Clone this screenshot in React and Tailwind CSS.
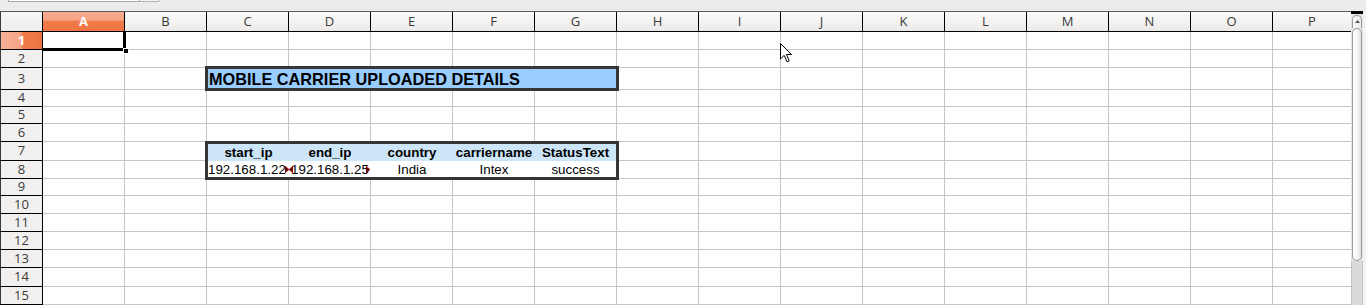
import React from "react";

const COLS = ["A", "B", "C", "D", "E", "F", "G", "H", "I", "J", "K", "L", "M", "N", "O", "P"];
const ROW_H = [
  "h-[18px]", "h-[18px]", "h-[22px]", "h-[17px]", "h-[17px]", "h-[18px]", "h-[19px]", "h-[18px]",
  "h-[17px]", "h-[18px]", "h-[18px]", "h-[18px]", "h-[18px]", "h-[19px]", "h-[18px]",
];

const HDR_FONT = "font-['Open_Sans',sans-serif] text-[13px] text-[#3a3a3a]";
const CELL_FONT = "font-['Liberation_Sans',Arial,sans-serif] text-[13.33px] text-black";

function Marker({ dir, className }) {
  return (
    <svg width="4" height="7" viewBox="0 0 4 7" className={"absolute " + className}>
      {dir === "r" ? (
        <path d="M0 0 L4 3.5 L0 7 Z" fill="#5a0a0a" stroke="#c00000" strokeWidth="0.6" />
      ) : (
        <path d="M4 0 L0 3.5 L4 7 Z" fill="#5a0a0a" stroke="#c00000" strokeWidth="0.6" />
      )}
    </svg>
  );
}

function TitleBox() {
  return (
    <div className="relative z-10 -ml-[2px] -mt-[2px] w-[414px] h-[25px] border-[3px] border-[#353535] bg-[#99ccff] flex items-center">
      <span className="pl-[1px] pt-[1px] font-['Liberation_Sans',Arial,sans-serif] text-[16.3px] font-bold text-black leading-none">
        MOBILE CARRIER UPLOADED DETAILS
      </span>
    </div>
  );
}

function TableBox() {
  const head = ["start_ip", "end_ip", "country", "carriername", "StatusText"];
  const widths = ["w-[81px]", "w-[82px]", "w-[82px]", "w-[82px]", "w-[81px]"];
  return (
    <div className={"relative z-10 -ml-[2px] -mt-[1px] w-[414px] h-[39px] border-[3px] border-[#353535] bg-white flex flex-col " + CELL_FONT}>
      <div className="flex h-[17px] bg-[#cce5f7]">
        {head.map((h, i) => (
          <div key={h} className={widths[i] + " flex items-center justify-center font-bold whitespace-nowrap"}>
            {h}
          </div>
        ))}
      </div>
      <div className="flex h-[16px] bg-white pt-[1px]">
        <div className="w-[81px] relative overflow-hidden whitespace-nowrap flex items-center">
          <span>192.168.1.22</span>
          <Marker dir="r" className="right-0 top-[4px]" />
        </div>
        <div className="w-[82px] relative overflow-hidden whitespace-nowrap flex items-center justify-center">
          <span>192.168.1.25</span>
          <Marker dir="l" className="left-0 top-[4px]" />
          <Marker dir="r" className="right-[1px] top-[4px]" />
        </div>
        <div className="w-[82px] flex items-center justify-center">India</div>
        <div className="w-[82px] flex items-center justify-center">Intex</div>
        <div className="w-[81px] flex items-center justify-center">success</div>
      </div>
    </div>
  );
}

function Row({ n }) {
  const h = ROW_H[n - 1];
  const selected = n === 1;
  return (
    <div className={"flex " + h}>
      <div
        className={
          "w-[43px] shrink-0 border-l border-l-[#3a3a3a] border-r border-r-black border-b border-b-black flex items-center justify-center " +
          HDR_FONT +
          (selected
            ? " bg-[linear-gradient(90deg,#f9b196_0%,#f7a587_45%,#ef7c4b_55%,#ee7543_100%)] text-white font-bold"
            : " bg-[#f1f0ef]")
        }
      >
        <span className={selected ? "text-white" : ""}>{n}</span>
      </div>
      {COLS.map((c) => {
        const w = c === "P" ? "w-[78px]" : "w-[82px]";
        if (n === 3 && c === "C") {
          return (
            <div key={c} className="w-[410px] shrink-0 border-b border-[#c6c6c6]">
              <TitleBox />
            </div>
          );
        }
        if ((n === 3 || n === 7 || n === 8) && ["D", "E", "F", "G"].includes(c)) return null;
        if (n === 7 && c === "C") {
          return (
            <div key={c} className="w-[410px] shrink-0">
              <TableBox />
            </div>
          );
        }
        if (n === 8 && c === "C") {
          return <div key={c} className="w-[410px] shrink-0 border-b border-[#c6c6c6]" />;
        }
        return (
          <div
            key={c}
            className={
              w +
              " shrink-0 relative border-b border-[#c6c6c6]" +
              (c === "P" ? "" : " border-r")
            }
          >
            {selected && c === "A" && (
              <>
                <div className="absolute -left-[1px] -top-[1px] w-[84px] h-[20px] border-t border-l border-r-[3px] border-b-[3px] border-black z-20" />
                <div className="absolute left-[80px] top-[16px] w-[6px] h-[6px] bg-black border border-white z-30" />
              </>
            )}
          </div>
        );
      })}
    </div>
  );
}

function Scrollbar() {
  return (
    <div className="w-[15px] shrink-0 flex bg-[#e6e5e4]">
      <div className="w-[12px] flex flex-col">
        <div className="h-[3px] bg-black" />
        <div className="h-[13px] mx-[1px] mt-[1px] rounded-t-[6px] border border-b-0 border-[#9a9a9a] bg-[linear-gradient(90deg,#fdfdfd,#e9e9e9)] flex items-start justify-center pt-[4px]">
          <svg width="5" height="3" viewBox="0 0 5 3">
            <path d="M0 3 L2.5 0 L5 3 Z" fill="#555" />
          </svg>
        </div>
        <div className="h-[233px] mx-[1px] rounded-[6px] border border-[#9a9a9a] bg-[linear-gradient(90deg,#ffffff,#f3f3f3_60%,#dedede)]" />
        <div className="flex-1 bg-[#d9d9d9] border-x border-[#c4c4c4]" />
      </div>
      <div className="w-[3px] bg-[#f2f2f2]" />
    </div>
  );
}

export default function App() {
  return (
    <div className="w-[1366px] h-[305px] overflow-hidden bg-[#edeceb] flex flex-col relative">
      <div className="h-[11px] shrink-0 flex items-start">
        <div className="ml-[8px] w-[132px] h-[2px] bg-white border-x border-b border-[#a8a8a8]" />
        <div className="w-[20px] h-[2px] bg-[#f3f3f2] border-r border-b border-[#b4b4b4] rounded-br-[3px]" />
      </div>
      <div className="flex flex-1 min-h-0">
        <div className="w-[1351px] shrink-0 flex flex-col bg-white">
          <div className="flex h-[21px] shrink-0 border-t border-t-[#5a5a5a] border-b border-b-black">
            <div className="w-[43px] shrink-0 border-l border-l-[#3a3a3a] border-r border-r-black bg-[linear-gradient(180deg,#f7f7f6,#eeedec)]" />
            {COLS.map((c) => (
              <div
                key={c}
                className={
                  (c === "P" ? "w-[78px]" : "w-[82px] border-r border-black") +
                  " shrink-0 flex items-center justify-center " +
                  HDR_FONT +
                  (c === "A"
                    ? " bg-[linear-gradient(180deg,#f8ad90_0%,#f6a385_42%,#ef7c4a_50%,#ee7443_100%)] !text-white font-bold"
                    : " bg-[linear-gradient(180deg,#fbfbfa,#ebeae9)]")
                }
              >
                {c}
              </div>
            ))}
          </div>
          {Array.from({ length: 15 }, (_, i) => (
            <Row key={i} n={i + 1} />
          ))}
        </div>
        <Scrollbar />
      </div>
      <svg
        className="absolute left-[780px] top-[43px] z-40"
        width="13"
        height="20"
        viewBox="0 0 13 20"
      >
        <path
          d="M0.5 0.5 L0.5 16 L4.2 12.4 L7 18.8 L9.2 17.8 L6.5 11.5 L11.5 11.5 Z"
          fill="#ffffff"
          stroke="#000000"
          strokeWidth="1"
          strokeLinejoin="round"
        />
      </svg>
    </div>
  );
}
